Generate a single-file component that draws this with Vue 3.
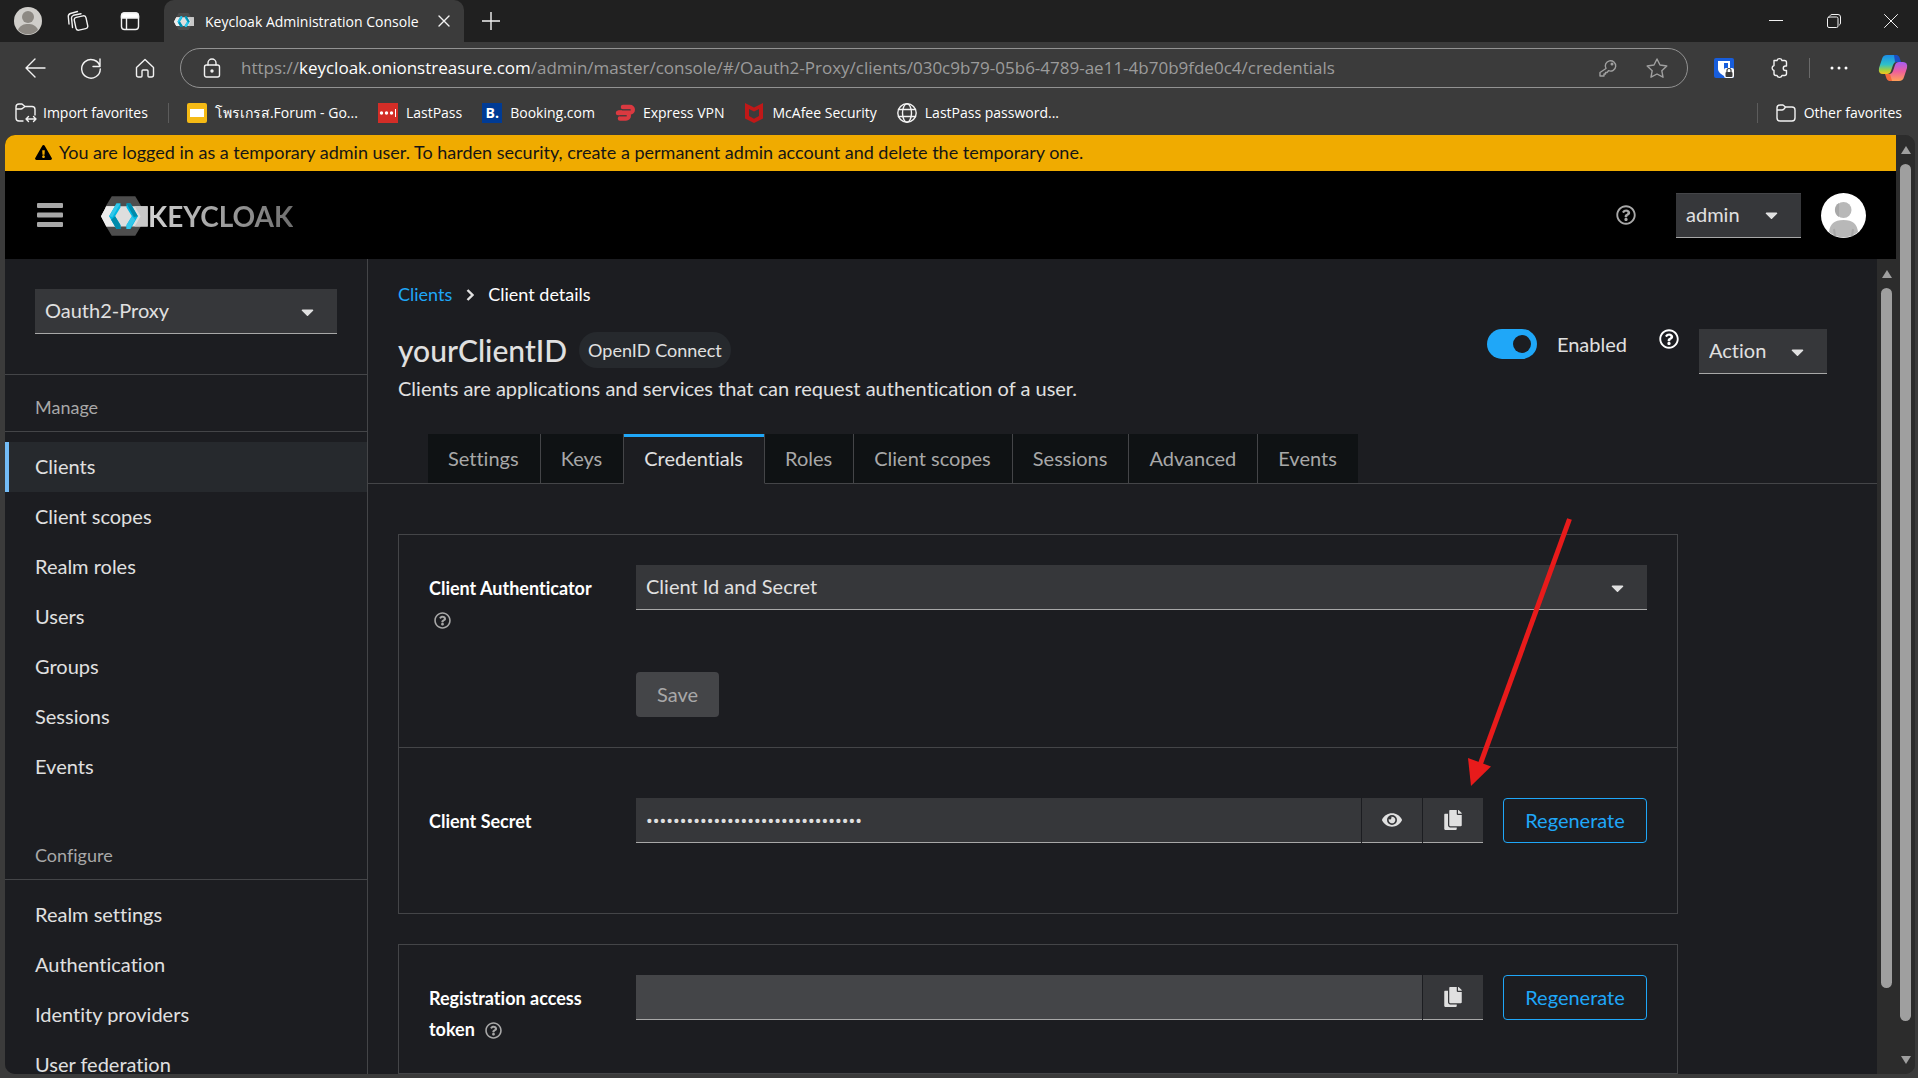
<script setup>
import { ref } from 'vue'

const manageItems = ['Clients', 'Client scopes', 'Realm roles', 'Users', 'Groups', 'Sessions', 'Events']
const configureItems = ['Realm settings', 'Authentication', 'Identity providers', 'User federation']
const tabs = ['Settings', 'Keys', 'Credentials', 'Roles', 'Client scopes', 'Sessions', 'Advanced', 'Events']

const activeItem = ref('Clients')
const activeTab = ref('Credentials')
const enabled = ref(true)
const secretVisible = ref(false)
const secret = ref('Zk3uQ9sVb7LxT1mWc5RyH8pNd2GfJ6aE')
const registrationToken = ref('')
</script>

<template>
  <div class="browser">
    <svg class="sprite" aria-hidden="true">
      <symbol id="i-help" viewBox="0 0 512 512">
        <path d="M256 8C119.043 8 8 119.083 8 256c0 136.997 111.043 248 248 248s248-111.003 248-248C504 119.083 392.957 8 256 8zm0 448c-110.532 0-200-89.431-200-200 0-110.495 89.472-200 200-200 110.491 0 200 89.471 200 200 0 110.53-89.431 200-200 200zm107.244-255.2c0 67.052-72.421 68.084-72.421 92.863V300c0 6.627-5.373 12-12 12h-45.647c-6.627 0-12-5.373-12-12v-8.659c0-35.745 27.1-50.034 47.579-61.516 17.561-9.845 28.324-16.541 28.324-29.579 0-17.246-21.999-28.693-39.784-28.693-23.189 0-33.894 10.977-48.942 29.969-4.057 5.12-11.46 6.071-16.666 2.124l-27.824-21.098c-5.107-3.872-6.251-11.066-2.644-16.363C184.846 131.491 214.94 112 261.794 112c49.071 0 101.45 38.304 101.45 88.8zM298 368c0 23.159-18.841 42-42 42s-42-18.841-42-42 18.841-42 42-42 42 18.841 42 42z" />
      </symbol>
      <symbol id="i-caret" viewBox="0 0 320 512">
        <path d="M31.3 192h257.3c17.8 0 26.7 21.5 14.1 34.1L174.1 354.8c-7.8 7.8-20.5 7.8-28.3 0L17.2 226.1C4.6 213.5 13.5 192 31.3 192z" />
      </symbol>
      <symbol id="i-copy" viewBox="0 0 448 512">
        <path d="M320 448v40c0 13.255-10.745 24-24 24H24c-13.255 0-24-10.745-24-24V120c0-13.255 10.745-24 24-24h72v296c0 30.879 25.121 56 56 56h168zm0-344V0H152c-13.255 0-24 10.745-24 24v368c0 13.255 10.745 24 24 24h272c13.255 0 24-10.745 24-24V128H344c-13.2 0-24-10.8-24-24zm120.971-31.029L375.029 7.029A24 24 0 0 0 358.059 0H352v96h96v-6.059a24 24 0 0 0-7.029-16.97z" />
      </symbol>
      <symbol id="i-keycloak" viewBox="0 0 140 118">
        <path d="M32 0h70l20 34v50l-20 34H32L12 84V34z" fill="#4d4d4d" />
        <path d="M16 30h123v60H16L0 60z" fill="#dedede" />
        <path d="M100 30h39v60h-39l18-30z" fill="#c8c8c8" />
        <path d="M16 30h26L26 60l16 30H16L0 60z" fill="#ececec" />
        <path d="M46 22h12v12L42 60l16 26v12H46L24 60z" fill="#00b8e3" />
        <path d="M46 22h12L34 62l-10-2z" fill="#33c6e9" />
        <path d="M42 60l16 26v12H46L30 70z" fill="#008aaa" />
        <path d="M76 22h12l22 38-22 38H76V86l16-26-16-26z" fill="#00b8e3" />
        <path d="M88 22l22 38-12 2-22-40z" fill="#008aaa" />
        <path d="M92 60l10 10-16 28H76V86z" fill="#33c6e9" />
      </symbol>
    </svg>

    <header class="chrome">
      <div class="tabstrip">
        <div class="strip-tools">
          <button class="icon-btn" aria-label="Profile">
            <svg width="28" height="28" viewBox="0 0 28 28"><circle cx="14" cy="14" r="14" fill="#d0ceca" /><circle cx="14" cy="10" r="6" fill="#8d8983" /><path d="M4 23c2-5 6-6 10-6s8 1 10 6a14 14 0 0 1-20 0z" fill="#8d8983" /></svg>
          </button>
          <button class="icon-btn" aria-label="Workspaces">
            <svg width="22" height="22" viewBox="0 0 22 22" class="line"><rect x="8" y="6.500" width="12" height="13" rx="2.500" transform="rotate(-12 14 13)" /><path d="M5.500 17.500 4.500 8c0-1.500.7-2.300 2-2.700L14 3.700" /><path d="M2 14 1.300 6.500C1.200 5 2 4 3.500 3.500L10.500 1.500" /></svg>
          </button>
          <button class="icon-btn" aria-label="Tab actions">
            <svg width="20" height="20" viewBox="0 0 20 20" class="line"><rect x="1.500" y="2" width="17" height="16.500" rx="3" /><path d="M1.500 5a3 3 0 0 1 3-3h11a3 3 0 0 1 3 3v2h-17z" fill="#fff" /><path d="M6.500 7v11" /></svg>
          </button>
        </div>
        <div class="browser-tab">
          <svg width="20" height="17"><use href="#i-keycloak" /></svg>
          <span class="browser-tab-title">Keycloak Administration Console</span>
          <button class="icon-btn" aria-label="Close tab">
            <svg width="12" height="12" viewBox="0 0 12 12" class="line"><path d="M1 1l10 10M11 1 1 11" /></svg>
          </button>
        </div>
        <button class="icon-btn new-tab" aria-label="New tab">
          <svg width="18" height="18" viewBox="0 0 18 18" class="line"><path d="M9 0v18M0 9h18" /></svg>
        </button>
        <div class="window-controls">
          <button class="icon-btn" aria-label="Minimize"><svg width="14" height="14" viewBox="0 0 14 14" class="line thin"><path d="M0 6.500h14" /></svg></button>
          <button class="icon-btn" aria-label="Restore"><svg width="14" height="14" viewBox="0 0 14 14" class="line thin"><rect x=".5" y="3" width="10.500" height="10.500" rx="1.500" /><path d="M3 1.500Q3.500.5 5 .5h6q2.500 0 2.500 2.500v6q0 1.500-1 2" /></svg></button>
          <button class="icon-btn" aria-label="Close"><svg width="14" height="14" viewBox="0 0 14 14" class="line thin"><path d="M.5.5l13 13M13.500.5l-13 13" /></svg></button>
        </div>
      </div>

      <div class="toolbar">
        <div class="nav-buttons">
          <button class="icon-btn" aria-label="Back"><svg width="22" height="20" viewBox="0 0 22 20" class="line"><path d="M21 10H2M11 1l-9 9 9 9" /></svg></button>
          <button class="icon-btn" aria-label="Refresh"><svg width="22" height="22" viewBox="0 0 22 22" class="line"><path d="M20 9.500A9.300 9.300 0 1 0 20.300 12M20 2v7.500h-7" /></svg></button>
          <button class="icon-btn" aria-label="Home"><svg width="20" height="20" viewBox="0 0 20 20" class="line"><path d="M1.500 9.500 10 1.500l8.500 8V17q0 2-2 2H14q-1 0-1-1v-5q0-1-1-1H8q-1 0-1 1v5q0 1-1 1H3.500q-2 0-2-2z" /></svg></button>
        </div>
        <div class="address">
          <svg width="18" height="20" viewBox="0 0 18 20" class="line"><rect x="1.500" y="7" width="15" height="12" rx="2" /><path d="M5 7V5a4 4 0 0 1 8 0v2" /><circle cx="9" cy="13" r="1" fill="#fff" /></svg>
          <p class="url">https://<b>keycloak.onionstreasure.com</b>/admin/master/console/#/Oauth2-Proxy/clients/030c9b79-05b6-4789-ae11-4b70b9fde0c4/credentials</p>
          <svg width="18" height="18" viewBox="0 0 18 18" class="line dim"><path d="M7 9.500a5.200 5.200 0 1 1 2.500 2.200L8 13.500H6.500V15H5v2H1v-3.500z" /><circle cx="13" cy="5" r=".8" /></svg>
          <svg width="22" height="20" viewBox="0 0 22 20" class="line dim"><path d="M11 1l3 6 6.800 1-5 4.700 1.200 6.500-6-3.200-6 3.200 1.200-6.500-5-4.700L8 7z" /></svg>
        </div>
        <button class="icon-btn bitwarden" aria-label="Bitwarden">
          <svg width="20" height="20" viewBox="0 0 20 20"><rect width="20" height="20" rx="2" fill="#175ddc" /><path d="M4 3h12v8c0 3-3 5-6 7-3-2-6-4-6-7z" fill="#fff" /><path d="M10 5h4v6c0 2-2 3-4 4z" fill="#175ddc" /><rect x="10" y="10" width="10" height="10" rx="2" fill="#fff" /><rect x="11.500" y="14" width="7" height="5" rx="1" fill="#3b3b3b" /><path d="M13 14v-1.500a2 2 0 0 1 4 0V14" fill="none" stroke="#3b3b3b" stroke-width="1.200" /></svg>
        </button>
        <button class="icon-btn puzzle" aria-label="Extensions">
          <svg width="20" height="22" viewBox="0 0 20 22" class="line"><path d="M5 3.500h3a2.600 2.600 0 0 1 5 0h2.500q2 0 2 2V9h-1a2.200 2.200 0 0 0 0 4.500h1v3q0 2-2 2H13a2.600 2.600 0 0 1-5 0H7q-2 0-2-2v-3a2.600 2.600 0 0 1 0-5z" /></svg>
        </button>
        <span class="bar-sep"></span>
        <button class="icon-btn more" aria-label="Settings and more"><svg width="18" height="4" viewBox="0 0 18 4"><g fill="#fff"><circle cx="2" cy="2" r="1.500" /><circle cx="9" cy="2" r="1.500" /><circle cx="16" cy="2" r="1.500" /></g></svg></button>
        <button class="icon-btn" aria-label="Copilot">
          <svg width="30" height="28" viewBox="0 0 30 28">
            <defs>
              <linearGradient id="cp-a" x1="0" y1="0" x2="0" y2="1"><stop offset="0" stop-color="#1b8de8" /><stop offset=".5" stop-color="#2fc0c8" /><stop offset=".8" stop-color="#a6cf3c" /><stop offset="1" stop-color="#f6c51c" /></linearGradient>
              <linearGradient id="cp-b" x1="0" y1="0" x2="0" y2="1"><stop offset="0" stop-color="#a55cf5" /><stop offset=".5" stop-color="#ee5f9c" /><stop offset="1" stop-color="#ffa057" /></linearGradient>
            </defs>
            <path d="M9 1h8q3 0 4 4l1 3h-4q-2 0-3 3l-2 6q-1 3-4 3H5q-5 0-4-6L4 5q1-4 5-4z" fill="url(#cp-a)" />
            <path d="M16 1h2q3 0 4 4l1 3h-6z" fill="#1a4fc4" />
            <path d="M21 27h-8q-3 0-4-4l-1-3h4q2 0 3-3l2-6q1-3 4-3h4q5 0 4 6l-3 9q-1 4-5 4z" fill="url(#cp-b)" />
            <path d="M14 27h-2q-3 0-4-4l-1-3h5z" fill="#f2683c" />
          </svg>
        </button>
      </div>

      <nav class="favorites" aria-label="Favorites">
        <a href="#" class="fav fav-import">
          <svg width="22" height="20" viewBox="0 0 22 20" class="line"><path d="M8 18H4q-3 0-3-3V4q0-3 3-3h3l3 2.500h7q3 0 3 3V12M1 6h5q1 0 2-1l2-1.500M11 16h10M13.500 13.500 11 16l2.500 2.500M18.500 13.500 21 16l-2.500 2.500" /></svg>
          Import favorites
        </a>
        <span class="fav-sep"></span>
        <a href="#" class="fav">
          <svg width="20" height="20" viewBox="0 0 20 20"><rect width="20" height="20" rx="2" fill="#f5ba15" /><rect x="3" y="6" width="14" height="8" fill="#fff" /></svg>
          โพรเกรส.Forum - Go...
        </a>
        <a href="#" class="fav">
          <svg width="20" height="20" viewBox="0 0 20 20"><rect width="20" height="20" fill="#d32d27" /><g fill="#fff"><circle cx="3.500" cy="10" r="1.700" /><circle cx="8.500" cy="10" r="1.700" /><circle cx="13.500" cy="10" r="1.700" /><rect x="17" y="6" width="1" height="8" /></g></svg>
          LastPass
        </a>
        <a href="#" class="fav">
          <span class="booking">B.</span>
          Booking.com
        </a>
        <a href="#" class="fav">
          <svg width="20" height="20" viewBox="0 0 20 20"><g fill="none" stroke="#da3940" stroke-linecap="round" stroke-width="4.500"><path d="M8 4h7a2.600 2.600 0 0 1 0 5.500H4" /><path d="M3 10h11M5 15.500h6a2.700 2.700 0 0 0 0-5.500" /></g><path d="M7 7h9M5 12.800h7" stroke="#3b3b3b" stroke-width=".7" /></svg>
          Express VPN
        </a>
        <a href="#" class="fav">
          <svg width="20" height="20" viewBox="0 0 20 20"><path d="M1 0l9 4.500L19 0v15.500L10 20l-9-4.500zM5 6v7l5 2.800 5-2.800V6l-5 2.500z" fill="#c01818" fill-rule="evenodd" /></svg>
          McAfee Security
        </a>
        <a href="#" class="fav">
          <svg width="20" height="20" viewBox="0 0 20 20" class="line"><circle cx="10" cy="10" r="9.200" /><ellipse cx="10" cy="10" rx="4.500" ry="9.200" /><path d="M1.500 6.500h17M1.500 13.500h17" /></svg>
          LastPass password...
        </a>
        <span class="fav-sep fav-sep-end"></span>
        <a href="#" class="fav fav-other">
          <svg width="20" height="18" viewBox="0 0 20 18" class="line"><path d="M1 4q0-3 3-3h3l2.500 2H16q3 0 3 3v8q0 3-3 3H4q-3 0-3-3zM1 6h5q1 0 2-1l1.500-2" /></svg>
          Other favorites
        </a>
      </nav>
    </header>

    <div class="viewport">
      <div class="page">
        <div class="banner" role="alert">
          <svg width="17" height="15" viewBox="0 0 576 512"><path d="M569.517 440.013C587.975 472.007 564.806 512 527.940 512H48.054c-36.937 0-59.999-40.055-41.577-71.987L246.423 23.985c18.467-32.009 64.720-31.951 83.154 0l239.940 416.028zM288 354c-25.405 0-46 20.595-46 46s20.595 46 46 46 46-20.595 46-46-20.595-46-46-46zm-43.673-165.346l7.418 136c.347 6.364 5.609 11.346 11.982 11.346h48.546c6.373 0 11.635-4.982 11.982-11.346l7.418-136c.375-6.874-5.098-12.654-11.982-12.654h-63.383c-6.884 0-12.356 5.780-11.981 12.654z" /></svg>
          You are logged in as a temporary admin user. To harden security, create a permanent admin account and delete the temporary one.
        </div>

        <header class="masthead">
          <button class="icon-btn menu" aria-label="Global navigation"><svg width="26" height="24" viewBox="0 0 26 24"><g fill="#a8a8a8"><rect width="26" height="5" rx="1" /><rect y="9.500" width="26" height="5" rx="1" /><rect y="19" width="26" height="5" rx="1" /></g></svg></button>
          <a href="#" class="brand" aria-label="Keycloak home">
            <svg width="47" height="40"><use href="#i-keycloak" /></svg>
            <span class="brand-name">KEYCLOAK</span>
          </a>
          <button class="icon-btn help-top" aria-label="Help"><svg width="20" height="20"><use href="#i-help" /></svg></button>
          <div class="select user-select">
            <select aria-label="User"><option>admin</option></select>
            <svg width="13" height="20"><use href="#i-caret" /></svg>
          </div>
          <svg class="avatar" width="45" height="45" viewBox="0 0 45 45"><circle cx="22.500" cy="22.500" r="22.500" fill="#fff" /><circle cx="22.500" cy="17" r="8" fill="#b8b8b8" /><path d="M18 10a8 8 0 0 0 0 14z" fill="#a8a8a8" /><path d="M8 39c1-8 5-12 14.500-12S36 31 37 39a22 22 0 0 1-29 0z" fill="#b8b8b8" /><path d="M14 43l-1-7M31 43l1-7" stroke="#a8a8a8" stroke-width="2" /></svg>
        </header>

        <div class="body">
          <aside class="sidebar">
            <div class="realm">
              <div class="select">
                <select aria-label="Realm"><option>Oauth2-Proxy</option></select>
                <svg width="13" height="20"><use href="#i-caret" /></svg>
              </div>
            </div>
            <nav aria-label="Manage">
              <h2 class="nav-title">Manage</h2>
              <ul>
                <li v-for="item in manageItems" :key="item">
                  <a href="#" class="nav-link" :class="{ current: item === activeItem }" @click.prevent="activeItem = item">{{ item }}</a>
                </li>
              </ul>
            </nav>
            <nav aria-label="Configure" class="configure">
              <h2 class="nav-title">Configure</h2>
              <ul>
                <li v-for="item in configureItems" :key="item">
                  <a href="#" class="nav-link" :class="{ current: item === activeItem }" @click.prevent="activeItem = item">{{ item }}</a>
                </li>
              </ul>
            </nav>
          </aside>

          <main class="main">
            <nav class="breadcrumb" aria-label="Breadcrumb">
              <a href="#">Clients</a>
              <svg width="8" height="12" viewBox="0 0 8 12"><path d="M1.500 1l5 5-5 5" fill="none" stroke="#e0e0e0" stroke-width="2.400" /></svg>
              <span>Client details</span>
            </nav>

            <div class="title-row">
              <div class="title-text">
                <div class="title-line">
                  <h1>yourClientID</h1>
                  <span class="badge">OpenID Connect</span>
                </div>
                <p>Clients are applications and services that can request authentication of a user.</p>
              </div>
              <div class="title-actions">
                <label class="switch">
                  <input v-model="enabled" type="checkbox" role="switch" />
                  Enabled
                </label>
                <button class="icon-btn help-enabled" aria-label="Help for enabled"><svg width="20" height="20"><use href="#i-help" /></svg></button>
                <div class="select action-select">
                  <select aria-label="Action"><option>Action</option></select>
                  <svg width="13" height="20"><use href="#i-caret" /></svg>
                </div>
              </div>
            </div>

            <div class="tabs" role="tablist">
              <button v-for="tab in tabs" :key="tab" class="tab" :class="{ active: tab === activeTab }" role="tab" :aria-selected="tab === activeTab" @click="activeTab = tab">{{ tab }}</button>
            </div>

            <div class="cards">
              <section class="card">
                <div class="row">
                  <div class="label-cell">
                    <label for="authenticator">Client Authenticator</label>
                    <button class="icon-btn help-field help-below" aria-label="Help for client authenticator"><svg width="17" height="17"><use href="#i-help" /></svg></button>
                  </div>
                  <div class="field-cell">
                    <div class="select">
                      <select id="authenticator"><option>Client Id and Secret</option></select>
                      <svg width="13" height="20"><use href="#i-caret" /></svg>
                    </div>
                    <button class="save" disabled>Save</button>
                  </div>
                </div>
                <div class="row row-secret">
                  <div class="label-cell"><label for="secret">Client Secret</label></div>
                  <div class="field-cell group">
                    <input id="secret" v-model="secret" class="text-input" :type="secretVisible ? 'text' : 'password'" readonly />
                    <button class="control" aria-label="Show secret" @click="secretVisible = !secretVisible">
                      <svg width="20" height="18" viewBox="0 0 576 512"><path d="M572.520 241.400C518.290 135.590 410.930 64 288 64S57.680 135.640 3.480 241.410a32.350 32.350 0 0 0 0 29.190C57.710 376.410 165.070 448 288 448s230.320-71.640 284.520-177.410a32.350 32.350 0 0 0 0-29.190zM288 400a144 144 0 1 1 144-144 143.930 143.930 0 0 1-144 144zm0-240a95.310 95.310 0 0 0-25.310 3.790 47.850 47.850 0 0 1-66.900 66.900A95.780 95.780 0 1 0 288 160z" /></svg>
                    </button>
                    <button class="control" aria-label="Copy secret"><svg width="18" height="20"><use href="#i-copy" /></svg></button>
                    <button class="regenerate">Regenerate</button>
                  </div>
                </div>
                <svg class="arrow" width="110" height="270" viewBox="0 0 110 270" aria-hidden="true"><path d="M104.500 2 15 248" stroke="#e81b1b" stroke-width="5" /><path d="M3 241l23 8.500L6 269z" fill="#e81b1b" /></svg>
              </section>

              <section class="card">
                <div class="row row-token">
                  <div class="label-cell">
                    <label for="token">Registration access token</label>
                    <button class="icon-btn help-field" aria-label="Help for registration access token"><svg width="17" height="17"><use href="#i-help" /></svg></button>
                  </div>
                  <div class="field-cell group">
                    <input id="token" v-model="registrationToken" class="text-input" type="text" disabled />
                    <button class="control" aria-label="Copy token"><svg width="18" height="20"><use href="#i-copy" /></svg></button>
                    <button class="regenerate">Regenerate</button>
                  </div>
                </div>
              </section>
            </div>
          </main>

          <div class="scrollbar" aria-hidden="true">
            <svg width="12" height="10" viewBox="0 0 12 10"><path d="M6 1l5 8H1z" /></svg>
            <span class="thumb thumb-inner"></span>
          </div>
        </div>
      </div>

      <div class="scrollbar" aria-hidden="true">
        <svg width="12" height="10" viewBox="0 0 12 10"><path d="M6 1l5 8H1z" /></svg>
        <span class="thumb thumb-outer"></span>
        <svg width="12" height="10" viewBox="0 0 12 10"><path d="M1 1h10L6 9z" /></svg>
      </div>
    </div>
  </div>
</template>

<style>
body {
  background: #3b3b3b;
}
</style>

<style scoped>
.browser {
  display: flex;
  flex-direction: column;
  height: 100vh;
  overflow: hidden;
  background: #3b3b3b;
  color: #fff;
  font-family: "Open Sans", "Noto Sans", sans-serif;
  font-size: 14px;
}
.browser *,
.browser *::before {
  box-sizing: border-box;
}
.sprite {
  position: absolute;
  width: 0;
  height: 0;
}
svg {
  flex: none;
  display: block;
}
button,
input,
select {
  font: inherit;
  color: inherit;
}
.icon-btn {
  display: flex;
  align-items: center;
  justify-content: center;
  flex: none;
  padding: 0;
  border: 0;
  background: none;
}
.line {
  fill: none;
  stroke: #f2f2f2;
  stroke-width: 1.4;
  stroke-linejoin: round;
  stroke-linecap: round;
}
.line.thin {
  stroke-width: 1;
}
.line.dim {
  stroke: #a0a0a0;
}

/* Browser chrome */
.chrome {
  flex: none;
}
.tabstrip {
  display: flex;
  height: 42px;
  background: #202020;
}
.strip-tools {
  display: flex;
  align-items: center;
  gap: 28px;
  width: 164px;
  padding-left: 14px;
}
.strip-tools .icon-btn:nth-child(2) {
  margin-right: 3px;
  margin-left: -3px;
}
.browser-tab {
  display: flex;
  align-items: center;
  width: 300px;
  padding: 0 14px 0 10px;
  border-radius: 10px 10px 0 0;
  background: #3b3b3b;
}
.browser-tab-title {
  flex: 1;
  padding-left: 11px;
  white-space: nowrap;
}
.new-tab {
  width: 53px;
}
.window-controls {
  display: flex;
  margin-left: auto;
}
.window-controls .icon-btn {
  width: 58px;
}
.window-controls .icon-btn:last-child {
  width: 55px;
}
.toolbar {
  display: flex;
  align-items: center;
  height: 52px;
  padding-right: 10px;
}
.nav-buttons {
  display: flex;
  justify-content: space-between;
  width: 180px;
  padding: 0 25px 0 24px;
}
.address {
  display: flex;
  align-items: center;
  flex: 1;
  height: 40px;
  padding: 0 19px 0 22px;
  border: 1px solid #929292;
  border-radius: 20px;
}
.url {
  flex: 1;
  margin: 0;
  padding: 0 0 2px 20px;
  color: #9b9b9b;
  font-size: 17px;
  white-space: nowrap;
}
.url b {
  color: #fff;
  font-weight: 400;
}
.address .dim + .dim {
  margin-left: 29px;
}
.bitwarden {
  margin-left: 26px;
}
.puzzle {
  margin-left: 35px;
}
.bar-sep {
  width: 1px;
  height: 20px;
  margin-left: 20px;
  background: #6a6a6a;
}
.more {
  margin: 0 30px 0 20px;
}
.favorites {
  display: flex;
  align-items: center;
  height: 41px;
  padding: 0 16px 4px 15px;
}
.fav {
  display: flex;
  align-items: center;
  gap: 8px;
  margin-right: 20px;
  color: #fff;
  text-decoration: none;
  white-space: nowrap;
}
.fav-import {
  gap: 6px;
}
.fav-other {
  margin-right: 0;
}
.fav-sep {
  width: 1px;
  height: 20px;
  margin-right: 18px;
  background: #5c5c5c;
}
.fav-sep-end {
  margin-left: auto;
}
.booking {
  width: 20px;
  height: 20px;
  background: #003b95;
  font-weight: 700;
  line-height: 20px;
  text-align: center;
}

/* Page frame */
.viewport {
  display: flex;
  flex: 1;
  min-height: 0;
  margin: 0 3px 4px 5px;
  overflow: hidden;
  border-radius: 10px;
  background: #2c2c2c;
}
.page {
  display: flex;
  flex-direction: column;
  flex: 1;
  min-width: 0;
  background: #1c1d21;
  color: #e0e0e0;
  font-family: Lato, "Liberation Sans", sans-serif;
  font-size: 20px;
  font-variant-ligatures: none;
}
.scrollbar {
  display: flex;
  flex-direction: column;
  align-items: center;
  flex: none;
  width: 19px;
  padding: 10px 0 9px;
  background: #2c2c2c;
  fill: #9f9f9f;
}
.thumb {
  width: 11px;
  margin-top: 9px;
  border-radius: 6px;
  background: #9f9f9f;
}
.thumb-inner {
  height: 88%;
}
.thumb-outer {
  flex: 1;
  margin-bottom: 34px;
}
.banner {
  display: flex;
  align-items: center;
  gap: 7px;
  flex: none;
  height: 36px;
  padding: 0 0 2px 30px;
  background: #f0ab00;
  color: #151515;
  font-size: 18px;
  white-space: nowrap;
}
.masthead {
  display: flex;
  align-items: center;
  flex: none;
  height: 88px;
  padding: 0 30px 0 32px;
  background: #000;
}
.brand {
  display: flex;
  align-items: center;
  margin-left: 38px;
  padding-top: 2px;
  text-decoration: none;
}
.brand-name {
  background: linear-gradient(90deg, #d2d2d2, #6e6e6e);
  background-clip: text;
  color: transparent;
  font-size: 28px;
  font-weight: 700;
}
.help-top {
  margin-left: auto;
  fill: #a8a8a8;
}
.avatar {
  margin-left: 20px;
}

/* Drop-downs */
.select {
  display: grid;
  align-items: center;
  background: #36373a;
}
.select select {
  grid-area: 1 / 1;
  width: 100%;
  height: 45px;
  padding: 0 10px 2px;
  border: 0;
  border-bottom: 1px solid #a8a8a8;
  border-radius: 0;
  background: transparent;
  appearance: none;
}
.select svg {
  grid-area: 1 / 1;
  justify-self: end;
  margin-right: 23px;
  fill: #e0e0e0;
  pointer-events: none;
}
.user-select {
  width: 125px;
  margin-left: 40px;
}
.user-select select {
  border-top: 1px solid #444548;
}

/* Sidebar */
.body {
  display: flex;
  flex: 1;
  min-height: 0;
  overflow: hidden;
}
.sidebar {
  flex: none;
  width: 363px;
  overflow: hidden;
  border-right: 1px solid #444548;
}
.realm {
  padding: 30px 30px 40px;
  border-bottom: 1px solid #444548;
}
.nav-title {
  margin: 0 0 10px;
  padding: 19px 30px 10px;
  border-bottom: 1px solid #444548;
  color: #a8a8a8;
  font-size: 18px;
  font-weight: 400;
  line-height: 27px;
}
.configure {
  padding-top: 31px;
}
.sidebar ul {
  margin: 0;
  padding: 0;
  list-style: none;
}
.nav-link {
  display: block;
  padding: 9px 26px 11px;
  border-left: 4px solid transparent;
  color: #e0e0e0;
  line-height: 30px;
  text-decoration: none;
}
.nav-link.current {
  border-left-color: #73bcf7;
  background: #26292d;
}

/* Main */
.main {
  flex: 1;
  min-width: 0;
  overflow: hidden;
}
.breadcrumb {
  display: flex;
  align-items: center;
  gap: 14px;
  padding: 22px 30px 0;
  color: #fff;
  font-size: 18px;
  line-height: 27px;
}
.breadcrumb a {
  color: #1fa7f8;
  text-decoration: none;
}
.title-row {
  display: flex;
  justify-content: space-between;
  padding: 21px 50px 0 30px;
}
.title-line {
  display: flex;
  align-items: center;
  gap: 12px;
  padding-top: 3px;
}
.title-line h1 {
  margin: 0;
  font-size: 30px;
  font-weight: 500;
  line-height: 36px;
}
.badge {
  padding: 0 9px;
  border-radius: 18px;
  background: #26292d;
  font-size: 18px;
  line-height: 36px;
}
.title-text p {
  margin: 5px 0 0;
  line-height: 30px;
}
.title-actions {
  display: flex;
  align-items: flex-start;
}
.switch {
  display: flex;
  align-items: center;
  gap: 20px;
  line-height: 30px;
}
.switch input {
  display: flex;
  align-items: center;
  width: 50px;
  height: 30px;
  margin: 0;
  padding: 0 6px;
  border-radius: 15px;
  background: #444548;
  appearance: none;
}
.switch input::before {
  width: 18px;
  height: 18px;
  border-radius: 50%;
  background: #1c1d21;
  content: "";
}
.switch input:checked {
  justify-content: flex-end;
  background: #1fa7f8;
}
.help-enabled {
  margin: 0 20px 0 32px;
  fill: #fff;
}
.action-select {
  width: 128px;
}
.tabs {
  display: flex;
  margin-top: 31px;
  padding-left: 60px;
  box-shadow: inset 0 -1px #444548;
}
.tab {
  height: 50px;
  padding: 0 21px 2px 20px;
  border: solid #444548;
  border-width: 0 1px 1px 0;
  background: #0f1214;
  color: #a8a8a8;
}
.tab:last-child {
  border-right: 0;
}
.tab.active {
  border-bottom-color: #1c1d21;
  background: #1c1d21;
  box-shadow: inset 0 3px #1fa7f8;
  color: #e0e0e0;
}
.cards {
  display: flex;
  flex-direction: column;
  gap: 30px;
  padding: 50px 30px 0;
}
.card {
  position: relative;
  width: 100%;
  max-width: 1280px;
  border: 1px solid #444548;
}
.row {
  display: flex;
  padding: 30px;
}
.row-secret {
  padding: 50px 30px 70px;
  border-top: 1px solid #444548;
}
.row-token {
  padding-bottom: 28px;
}
.label-cell {
  flex: none;
  width: 207px;
  padding: 8px 20px 0 0;
  color: #fff;
  font-size: 18px;
  font-weight: 700;
  line-height: 31px;
}
.help-field {
  display: inline-flex;
  margin-left: 10px;
  vertical-align: -3px;
  fill: #a8a8a8;
}
.help-below {
  display: flex;
  margin-top: 8px;
  margin-left: 5px;
}
.field-cell {
  flex: 1;
  min-width: 0;
}
.save {
  height: 45px;
  margin-top: 62px;
  padding: 0 21px 2px;
  border: 0;
  border-radius: 4px;
  background: #444548;
  color: #a8a8a8;
}
.group {
  display: flex;
}
.text-input {
  flex: 1;
  min-width: 0;
  height: 45px;
  padding: 1px 10px 0;
  border: 0;
  border-bottom: 1px solid #a8a8a8;
  border-radius: 0;
  background: #36373a;
  font-family: Roboto, sans-serif;
}
.text-input:disabled {
  background: #444548;
}
.control {
  display: flex;
  align-items: center;
  justify-content: center;
  width: 60px;
  height: 45px;
  margin-left: 1px;
  padding: 0;
  border: 0;
  border-bottom: 1px solid #a8a8a8;
  background: #36373a;
  fill: #e0e0e0;
}
.regenerate {
  width: 144px;
  height: 45px;
  margin-left: 20px;
  padding: 0 0 2px;
  border: 1px solid #1fa7f8;
  border-radius: 4px;
  background: none;
  color: #1fa7f8;
}
.arrow {
  position: absolute;
  top: -18px;
  right: 102px;
}
</style>
